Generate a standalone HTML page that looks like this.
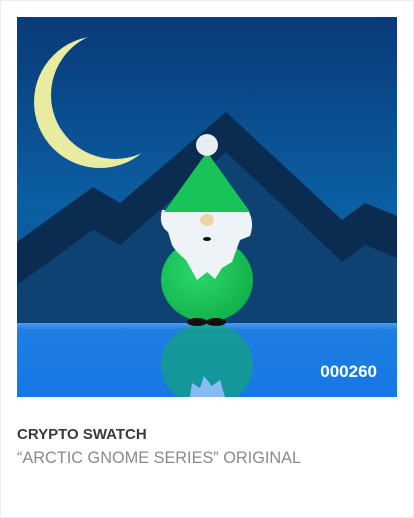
<!DOCTYPE html>
<html><head><meta charset="utf-8"><style>
html,body{margin:0;padding:0;background:#fff;}
.card{position:absolute;left:0;top:0;width:412px;height:516px;border:1px solid #ececec;background:#fff;}
svg{position:absolute;left:17px;top:17px;}
.t1{position:absolute;left:17px;top:426px;font:bold 15px "Liberation Sans",sans-serif;color:#3a3a3a;}
.t2{position:absolute;left:17px;top:449px;font:16.3px "Liberation Sans",sans-serif;color:#8a8a8a;}
</style></head><body>
<div class="card"></div>
<svg width="380" height="380" viewBox="17 17 380 380">
<defs>
<linearGradient id="sky" x1="0" y1="0" x2="0" y2="1">
<stop offset="0" stop-color="#0a3a78"/><stop offset="0.5" stop-color="#0b5fa3"/><stop offset="1" stop-color="#0b4a82"/></linearGradient>
<linearGradient id="ice" x1="0" y1="0" x2="0" y2="1">
<stop offset="0" stop-color="#4a9af0"/><stop offset="0.1" stop-color="#1f7ee0"/><stop offset="1" stop-color="#1678e6"/></linearGradient>
<radialGradient id="body" cx="0.4" cy="0.4" r="0.7"><stop offset="0" stop-color="#2bd86a"/><stop offset="1" stop-color="#0fae48"/></radialGradient>
<mask id="moon"><rect x="17" y="17" width="380" height="380" fill="#000"/><circle cx="100" cy="102" r="66" fill="#fff"/><circle cx="115" cy="95" r="64" fill="#000"/></mask>
</defs>
<rect x="17" y="17" width="380" height="380" fill="url(#sky)"/>
<rect x="17" y="17" width="380" height="380" fill="#e8eba0" mask="url(#moon)"/>
<polygon points="17,285 93,230 120,245 226,152 342,262 365,245 397,258 397,330 17,330" fill="#0e4272"/>
<polygon points="17,242 93,187 120,203 226,112 342,220 365,203 397,216 397,258 365,245 342,262 226,152 120,245 93,230 17,285" fill="#0a2c50"/>
<rect x="17" y="323" width="380" height="74" fill="url(#ice)"/>
<g opacity="0.55">
<ellipse cx="207" cy="365" rx="46" ry="42" fill="#10b060"/>
<path d="M190,397 L192,383 L200,388 L204,376 L212,386 L220,380 L225,397Z" fill="#e6f0ff"/>
</g>
<ellipse cx="207" cy="280" rx="46" ry="42" fill="url(#body)"/>
<path d="M162,210 Q158,225 168,232 L172,245 Q176,252 186,260 L197,280 L207,272 L215,279 L222,268 L232,262 L240,240 L250,236 Q255,222 248,210Z" fill="#eef3f8"/>
<polygon points="207,152 164,212 250,212" fill="#18c458"/>
<circle cx="207" cy="145" r="11" fill="#e8edf2"/>
<ellipse cx="207" cy="220" rx="7" ry="6" fill="#ecd3a8"/>
<ellipse cx="207" cy="239" rx="4" ry="2" fill="#111"/>
<ellipse cx="197" cy="322" rx="10" ry="4" fill="#111"/>
<ellipse cx="216" cy="322" rx="10" ry="4" fill="#111"/>
<text x="377" y="377" text-anchor="end" font-family="Liberation Sans,sans-serif" font-weight="bold" font-size="17" fill="#fff">000260</text>
</svg>
<div class="t1">CRYPTO SWATCH</div>
<div class="t2">“ARCTIC GNOME SERIES” ORIGINAL</div>
</body></html>
